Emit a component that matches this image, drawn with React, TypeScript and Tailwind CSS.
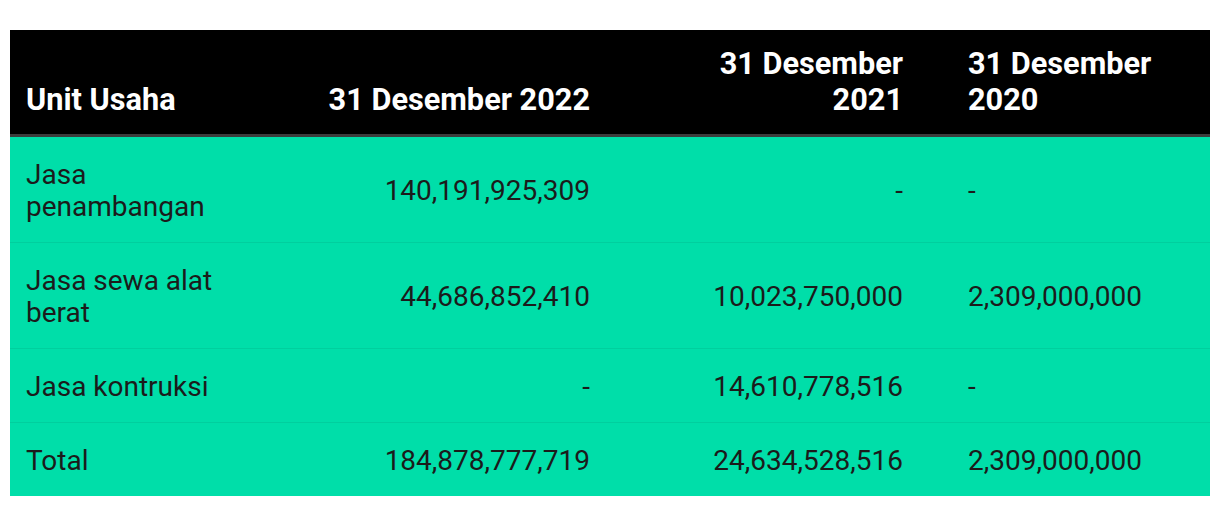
const rows = [
  { unit: "Jasa penambangan", y2022: "140,191,925,309", y2021: "-", y2020: "-" },
  { unit: "Jasa sewa alat berat", y2022: "44,686,852,410", y2021: "10,023,750,000", y2020: "2,309,000,000" },
  { unit: "Jasa kontruksi", y2022: "-", y2021: "14,610,778,516", y2020: "-" },
  { unit: "Total", y2022: "184,878,777,719", y2021: "24,634,528,516", y2020: "2,309,000,000" },
];

export default function App() {
  return (
    <div className="bg-white w-[1220px] h-[506px] pt-[30px] px-[10px] font-['Roboto',sans-serif]">
      <table className="w-[1200px] table-fixed border-collapse">
        <colgroup>
          <col className="w-[240px]" />
          <col className="w-[356px]" />
          <col className="w-[313px]" />
          <col className="w-[291px]" />
        </colgroup>
        <thead>
          <tr className="bg-black text-white text-[30.7px] leading-[36px] font-bold border-b-[3px] border-[#3d3d3d]">
            <th className="text-left align-bottom pl-4 pr-4 py-4">Unit Usaha</th>
            <th className="text-right align-bottom pl-4 pr-4 py-4">31 Desember 2022</th>
            <th className="text-right align-bottom pl-[80px] pr-4 py-4">31 Desember 2021</th>
            <th className="text-left align-bottom pl-[49px] pr-4 py-4">31 Desember 2020</th>
          </tr>
        </thead>
        <tbody className="bg-[#00dea9] text-[#1b1b1b] text-[28px] leading-[32px]">
          {rows.map((r) => (
            <tr key={r.unit} className="border-b border-[#00cf9e] last:border-b-0">
              <td className="align-middle pl-4 pr-4 pt-[22px] pb-[19px]">{r.unit}</td>
              <td className="align-middle text-right pl-4 pr-4 pt-[22px] pb-[19px]">{r.y2022}</td>
              <td className="align-middle text-right pl-4 pr-4 pt-[22px] pb-[19px]">{r.y2021}</td>
              <td className="align-middle pl-[49px] pr-4 pt-[22px] pb-[19px]">{r.y2020}</td>
            </tr>
          ))}
        </tbody>
      </table>
    </div>
  );
}
